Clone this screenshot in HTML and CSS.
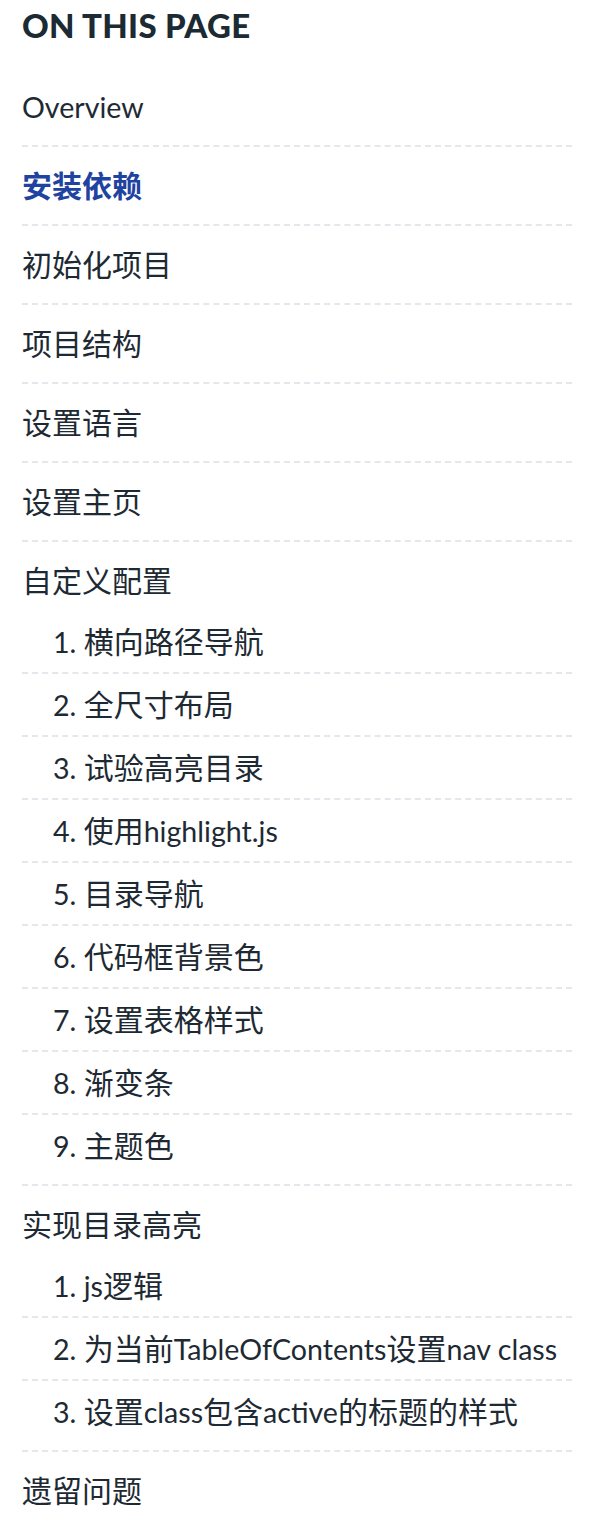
FILE: index.html
```html
<!DOCTYPE html>
<html lang="zh-CN">
<head>
<meta charset="utf-8">
<title>On this page</title>
<link rel="stylesheet" href="styles.css">
</head>
<body>
<nav class="toc">
  <h2 class="toc-title">ON THIS PAGE</h2>
  <ul class="toc-list">
    <li class="toc-item"><a href="#overview"><span class="lat">Overview</span></a></li>
    <li class="toc-item active"><a href="#deps">安装依赖</a></li>
    <li class="toc-item"><a href="#init">初始化项目</a></li>
    <li class="toc-item"><a href="#structure">项目结构</a></li>
    <li class="toc-item"><a href="#lang">设置语言</a></li>
    <li class="toc-item"><a href="#home">设置主页</a></li>
    <li class="toc-item has-children"><a href="#config">自定义配置</a>
      <ul class="toc-sub">
        <li class="toc-subitem"><a href="#c1"><span class="lat">1. </span>横向路径导航</a></li>
        <li class="toc-subitem"><a href="#c2"><span class="lat">2. </span>全尺寸布局</a></li>
        <li class="toc-subitem"><a href="#c3"><span class="lat">3. </span>试验高亮目录</a></li>
        <li class="toc-subitem"><a href="#c4"><span class="lat">4. </span>使用<span class="lat">highlight.js</span></a></li>
        <li class="toc-subitem"><a href="#c5"><span class="lat">5. </span>目录导航</a></li>
        <li class="toc-subitem"><a href="#c6"><span class="lat">6. </span>代码框背景色</a></li>
        <li class="toc-subitem"><a href="#c7"><span class="lat">7. </span>设置表格样式</a></li>
        <li class="toc-subitem"><a href="#c8"><span class="lat">8. </span>渐变条</a></li>
        <li class="toc-subitem"><a href="#c9"><span class="lat">9. </span>主题色</a></li>
      </ul>
    </li>
    <li class="toc-item has-children"><a href="#highlight">实现目录高亮</a>
      <ul class="toc-sub">
        <li class="toc-subitem"><a href="#h1"><span class="lat">1. js</span>逻辑</a></li>
        <li class="toc-subitem"><a href="#h2"><span class="lat">2. </span>为当前<span class="lat">TableOfContents</span>设置<span class="lat">nav class</span></a></li>
        <li class="toc-subitem"><a href="#h3"><span class="lat">3. </span>设置<span class="lat">class</span>包含<span class="lat">active</span>的标题的样式</a></li>
      </ul>
    </li>
    <li class="toc-item"><a href="#issues">遗留问题</a></li>
  </ul>
</nav>
</body>
</html>
```

FILE: styles.css
```css
html, body {
  margin: 0;
  padding: 0;
  background: #ffffff;
}

body {
  font-family: "Lato", "Noto Sans CJK SC", sans-serif;
  color: #1e2a33;
}

.toc {
  padding: 0 18px 0 22px;
}

.toc-title {
  margin: 0;
  padding-top: 6px;
  font-size: 33px;
  line-height: 38px;
  font-weight: 900;
  letter-spacing: 0.3px;
  color: #1c2a33;
  height: 62px;
}

.toc-list,
.toc-sub {
  list-style: none;
  margin: 0;
  padding: 0;
}

.toc-item {
  padding: 16px 0;
  border-bottom: 2px dashed #e4e8ec;
  font-size: 30px;
  line-height: 45px;
}

.toc-item:last-child {
  border-bottom: none;
}

.toc-item.has-children {
  padding-bottom: 8px;
}

.toc-sub {
  margin-top: 8px;
}

.toc-subitem {
  padding: 8px 0 8px 31px;
  border-bottom: 2px dashed #e4e8ec;
  white-space: nowrap;
}

.toc-subitem:last-child {
  border-bottom: none;
}

.toc a {
  color: inherit;
  text-decoration: none;
}

.lat {
  font-size: 28.6px;
  line-height: 1;
  white-space: pre;
}

.toc-item.active > a {
  color: #1f43a0;
  font-weight: 700;
}
```
